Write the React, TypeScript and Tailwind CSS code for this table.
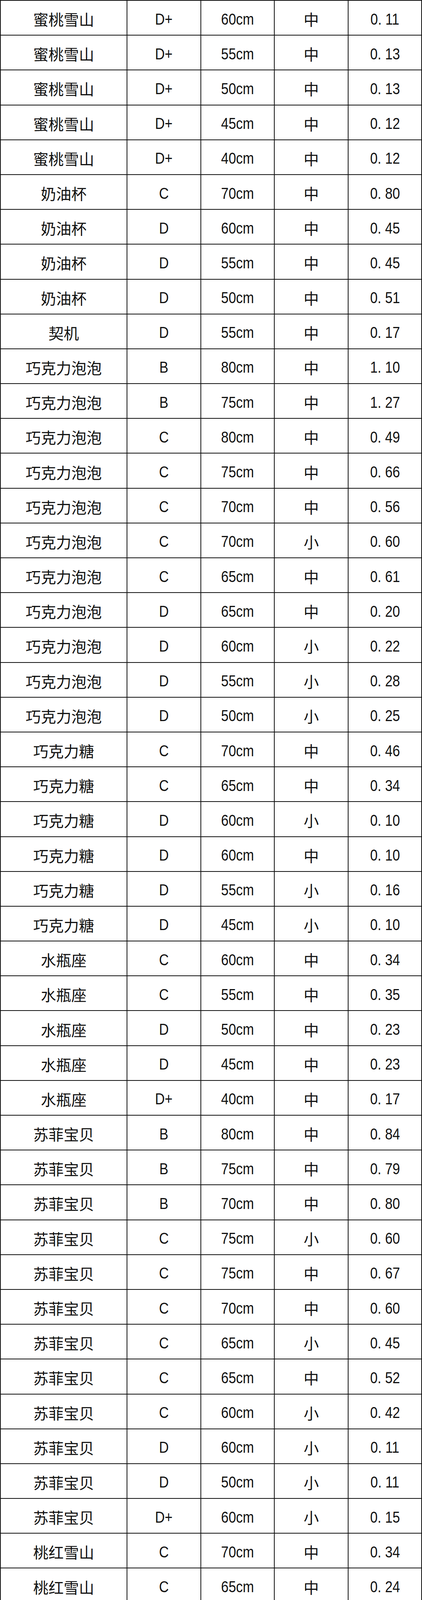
import React from "react";

type Row = [string, string, string, string, string];

const rows: Row[] = [
  ["蜜桃雪山", "D+", "60cm", "中", "0.11"],
  ["蜜桃雪山", "D+", "55cm", "中", "0.13"],
  ["蜜桃雪山", "D+", "50cm", "中", "0.13"],
  ["蜜桃雪山", "D+", "45cm", "中", "0.12"],
  ["蜜桃雪山", "D+", "40cm", "中", "0.12"],
  ["奶油杯", "C", "70cm", "中", "0.80"],
  ["奶油杯", "D", "60cm", "中", "0.45"],
  ["奶油杯", "D", "55cm", "中", "0.45"],
  ["奶油杯", "D", "50cm", "中", "0.51"],
  ["契机", "D", "55cm", "中", "0.17"],
  ["巧克力泡泡", "B", "80cm", "中", "1.10"],
  ["巧克力泡泡", "B", "75cm", "中", "1.27"],
  ["巧克力泡泡", "C", "80cm", "中", "0.49"],
  ["巧克力泡泡", "C", "75cm", "中", "0.66"],
  ["巧克力泡泡", "C", "70cm", "中", "0.56"],
  ["巧克力泡泡", "C", "70cm", "小", "0.60"],
  ["巧克力泡泡", "C", "65cm", "中", "0.61"],
  ["巧克力泡泡", "D", "65cm", "中", "0.20"],
  ["巧克力泡泡", "D", "60cm", "小", "0.22"],
  ["巧克力泡泡", "D", "55cm", "小", "0.28"],
  ["巧克力泡泡", "D", "50cm", "小", "0.25"],
  ["巧克力糖", "C", "70cm", "中", "0.46"],
  ["巧克力糖", "C", "65cm", "中", "0.34"],
  ["巧克力糖", "D", "60cm", "小", "0.10"],
  ["巧克力糖", "D", "60cm", "中", "0.10"],
  ["巧克力糖", "D", "55cm", "小", "0.16"],
  ["巧克力糖", "D", "45cm", "小", "0.10"],
  ["水瓶座", "C", "60cm", "中", "0.34"],
  ["水瓶座", "C", "55cm", "中", "0.35"],
  ["水瓶座", "D", "50cm", "中", "0.23"],
  ["水瓶座", "D", "45cm", "中", "0.23"],
  ["水瓶座", "D+", "40cm", "中", "0.17"],
  ["苏菲宝贝", "B", "80cm", "中", "0.84"],
  ["苏菲宝贝", "B", "75cm", "中", "0.79"],
  ["苏菲宝贝", "B", "70cm", "中", "0.80"],
  ["苏菲宝贝", "C", "75cm", "小", "0.60"],
  ["苏菲宝贝", "C", "75cm", "中", "0.67"],
  ["苏菲宝贝", "C", "70cm", "中", "0.60"],
  ["苏菲宝贝", "C", "65cm", "小", "0.45"],
  ["苏菲宝贝", "C", "65cm", "中", "0.52"],
  ["苏菲宝贝", "C", "60cm", "小", "0.42"],
  ["苏菲宝贝", "D", "60cm", "小", "0.11"],
  ["苏菲宝贝", "D", "50cm", "小", "0.11"],
  ["苏菲宝贝", "D+", "60cm", "小", "0.15"],
  ["桃红雪山", "C", "70cm", "中", "0.34"],
  ["桃红雪山", "C", "65cm", "中", "0.24"],
  ["甜蜜雪山", "C", "70cm", "中", "0.29"],
  ["甜蜜雪山", "C", "65cm", "中", "0.30"],
  ["甜蜜雪山", "D", "60cm", "中", "0.14"],
  ["王熙凤", "A+", "80cm", "中", "0.20"],
  ["王熙凤", "B+", "80cm", "小", "0.20"],
  ["王熙凤", "B+", "80cm", "中", "0.18"],
  ["王熙凤", "B+", "60cm", "中", "0.40"],
  ["唯夏", "C", "75cm", "中", "0.21"],
  ["唯夏", "C", "70cm", "中", "0.20"],
  ["唯夏", "C", "65cm", "中", "0.19"],
  ["仙子之吻", "C", "70cm", "中", "1.09"],
  ["香水女人", "C", "70cm", "中", "0.39"],
  ["猩红泡泡", "C", "65cm", "中", "0.51"],
  ["猩红泡泡", "D", "60cm", "小", "0.11"],
  ["猩红泡泡", "D", "50cm", "小", "0.11"],
  ["杏仁酒", "C", "65cm", "中", "0.24"],
  ["杏仁酒", "C", "60cm", "中", "0.24"],
  ["杏仁酒", "D", "60cm", "中", "0.18"],
  ["月光漫步", "B+", "80cm", "中", "0.82"],
  ["月光漫步", "B+", "70cm", "小", "0.80"],
];

const cjk = "font-['Noto_Sans_CJK_SC',sans-serif] text-[39px]";
const latin = "font-['Liberation_Sans',Arial,sans-serif] text-[40px]";

const cell =
  "flex items-center justify-center border-r-2 border-b-2 border-[#111] text-[#111] leading-none pt-[6px] whitespace-pre";

function Narrow({ children }: { children: React.ReactNode }) {
  return <span className="inline-block scale-x-[0.86]">{children}</span>;
}

export default function App() {
  return (
    <div className="w-[1080px] bg-white">
      <div className="grid grid-cols-[324px_189px_188px_189px_188px] auto-rows-[89.2px] border-t-2 border-l-2 border-[#111]">
        {rows.map((r, i) => (
          <React.Fragment key={i}>
            <div className={`${cell} ${cjk}`}>{r[0]}</div>
            <div className={`${cell} ${latin}`}>
              <Narrow>{r[1]}</Narrow>
            </div>
            <div className={`${cell} ${latin}`}>
              <Narrow>{r[2]}</Narrow>
            </div>
            <div className={`${cell} ${cjk}`}>{r[3]}</div>
            <div className={`${cell} ${latin}`}>
              <Narrow>{r[4].replace(".", ". ")}</Narrow>
            </div>
          </React.Fragment>
        ))}
      </div>
    </div>
  );
}
